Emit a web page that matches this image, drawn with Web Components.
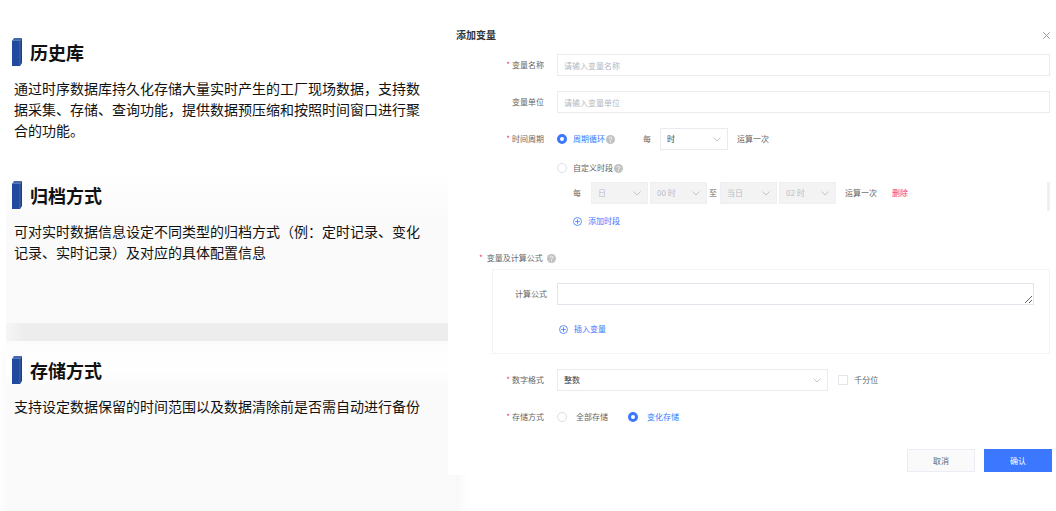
<!DOCTYPE html>
<html lang="zh-CN">
<head>
<meta charset="utf-8">
<title>添加变量</title>
<style>
    * { box-sizing: border-box; }
    body {
        margin: 0;
        background: #fff;
        color: #666;
        font: 8px/12px "Noto Sans CJK SC", "Liberation Sans", sans-serif;
    }
    main {
        display: flex;
        align-items: flex-start;
        min-height: 100vh;
    }
    .features {
        display: flex;
        flex: 0 0 456px;
        flex-direction: column;
        align-self: stretch;
    }
    .first { padding-top: 38px; min-height: 172px; }
    .second {
        padding-top: 9px;
        min-height: 151px;
        background: linear-gradient(#fff, #fafafa 46px);
    }
    .third {
        flex: 1;
        padding-top: 15px;
        background: linear-gradient(#fcfcfc, #fff 28px, #fafafa 46px);
        box-shadow: 2px 8px 13px #0000000d;
    }
    .divider {
        height: 18px;
        margin-left: 6px;
        background: linear-gradient(to right, #f6f6f6, #ededed 18px);
    }
    .line { display: flex; align-items: center; }
    .times { padding-left: 16px; }
    .space { width: 28px; }
    .pair { display: flex; gap: 2px; }
    .to { padding: 0 3px 0 2px; }
    .section { padding: 10px 0 5px 23px; display: flex; align-items: center; gap: 3px; }
    .section b { color: #f5356e; font-weight: normal; margin-right: 1px; }
    .panel {
        margin: -15px 0 0 36px;
        padding: 13px 15px 18px 0;
        border: 1px solid #f2f3f5;
    }
    .insert { padding: 18px 0 0 66px; }
    .period { width: 68px; }
    .slot { width: 57px; }
</style>
</head>
<body>
<main>
    <section class="features">
        <feature-block class="first">
            <span slot="title">历史库</span>
            通过时序数据库持久化存储大量实时产生的工厂现场数据，支持数据采集、存储、查询功能，提供数据预压缩和按照时间窗口进行聚合的功能。
        </feature-block>
        <feature-block class="second">
            <span slot="title">归档方式</span>
            可对实时数据信息设定不同类型的归档方式（例：定时记录、变化记录、实时记录）及对应的具体配置信息
        </feature-block>
        <div class="divider"></div>
        <feature-block class="third">
            <span slot="title">存储方式</span>
            支持设定数据保留的时间范围以及数据清除前是否需自动进行备份
        </feature-block>
    </section>

    <variable-dialog>
        <span slot="title">添加变量</span>

        <text-field label="变量名称" placeholder="请输入变量名称" required></text-field>
        <text-field label="变量单位" placeholder="请输入变量单位"></text-field>

        <form-row label="时间周期" required>
            <div class="line">
                <radio-item group="period" label="周期循环" checked></radio-item>
                <help-icon></help-icon>
                <span class="space"></span>
                <span>每</span>
                <select-box class="period" style="margin: 0 9px" label="周期单位" options="时,日,月"></select-box>
                <span>运算一次</span>
            </div>
            <div class="line" style="margin-top: 12px">
                <radio-item group="period" label="自定义时段"></radio-item>
                <help-icon></help-icon>
            </div>
            <div class="line times" style="margin-top: 8px">
                <span style="margin-right: 10px">每</span>
                <div class="pair">
                    <select-box class="slot" label="开始日" options="日" disabled></select-box>
                    <select-box class="slot" label="开始时间" options="00 时" disabled></select-box>
                </div>
                <span class="to">至</span>
                <div class="pair">
                    <select-box class="slot" label="结束日" options="当日" disabled></select-box>
                    <select-box class="slot" label="结束时间" options="02 时" disabled></select-box>
                </div>
                <span style="margin: 0 15px 0 9px">运算一次</span>
                <link-button danger>删除</link-button>
            </div>
            <div class="line times" style="margin-top: 11px">
                <link-button plus>添加时段</link-button>
            </div>
        </form-row>

        <div class="section"><b>*</b><span>变量及计算公式</span><help-icon></help-icon></div>
        <div class="panel">
            <text-field label="计算公式" multiline></text-field>
            <div class="insert"><link-button plus>插入变量</link-button></div>
        </div>

        <select-field label="数字格式" options="整数,小数" required>
            <check-item label="千分位"></check-item>
        </select-field>

        <form-row label="存储方式" required>
            <div class="line" style="gap: 20px">
                <radio-item group="store" label="全部存储" wide></radio-item>
                <radio-item group="store" label="变化存储" wide checked></radio-item>
            </div>
        </form-row>

        <action-button slot="footer">取消</action-button>
        <action-button slot="footer" primary>确认</action-button>
    </variable-dialog>
</main>

<script>
    const baseStyles = `
        * { box-sizing: border-box; }
        :host { display: block; }
        input, select, textarea, button { font: inherit; color: inherit; border-radius: 0; outline: none; }
    `;

    // label column + control column, shared by every kind of field
    const rowStyles = `
        .row { display: flex; gap: 13px; }
        .name {
            flex: 0 0 88px;
            line-height: 22px;
            text-align: right;
            white-space: nowrap;
        }
        .name i { color: #f5356e; font-style: normal; margin-right: 2px; }
        .control { flex: 1; min-width: 0; }
    `;

    const chevron = `
        <svg width="8" height="5" viewBox="0 0 8 5" fill="none" stroke="#c0c4cc">
            <path d="M.5 .5 4 4 7.5 .5"/>
        </svg>`;

    class BaseElement extends HTMLElement {
        constructor() {
            super();
            this.attachShadow({ mode: "open" });
        }
        attr(name) {
            return this.getAttribute(name) || "";
        }
        star() {
            return this.hasAttribute("required") ? "<i>*</i>" : "";
        }
        connectedCallback() {
            const template = document.createElement("template");
            template.innerHTML = `<style>${baseStyles}${this.getStyles()}</style>${this.getTemplate()}`;
            this.shadowRoot.replaceChildren(template.content.cloneNode(true));
            this.ready();
        }
        ready() {}
    }

    class FeatureBlock extends BaseElement {
        getStyles() {
            return `
            :host { margin-left: 6px; padding-left: 6px; }
            header { display: flex; align-items: center; gap: 8px; height: 28px; }
            h2 { margin: 0; font-size: 18px; line-height: 28px; color: #111; }
            p { margin: 12px 0 0 2px; max-width: 29em; font-size: 14px; line-height: 21px; color: #111; }
            svg { display: block; }
            `;
        }
        getTemplate() {
            return `
            <header>
                <svg width="10" height="28" viewBox="0 0 10 28">
                    <path d="M0 3 2 0H10L8 3Z" fill="#4468ac"/>
                    <path d="M8 3 10 0V25L8 28Z" fill="#1b3f86"/>
                    <path d="M0 3H8V28H0Z" fill="#1f4a9d"/>
                    <path d="M0 2.5H8V27" fill="none" stroke="#6f8cc4" stroke-width=".5"/>
                </svg>
                <h2><slot name="title"></slot></h2>
            </header>
            <p><slot></slot></p>`;
        }
    }

    class VariableDialog extends BaseElement {
        getStyles() {
            return `
            :host {
                position: relative;
                flex: 1;
                min-width: 0;
                margin-left: -8px;
                padding: 26px 6px 3px 8px;
                background: #fff;
            }
            header { display: flex; justify-content: space-between; align-items: center; margin-bottom: 10px; }
            h3 { margin: 0; font-size: 10px; line-height: 18px; color: #333; }
            .close { padding: 0; border: 0; background: none; display: flex; }
            .body { display: flex; flex-direction: column; gap: 15px; }
            footer { display: flex; justify-content: flex-end; gap: 9px; margin: 21px -2px 0 0; }
            /* scroll thumb lies over the form's right edge */
            .thumb { position: absolute; top: 182px; right: 6px; width: 3px; height: 29px; background: #f0f0f1; }
            `;
        }
        getTemplate() {
            return `
            <header>
                <h3><slot name="title"></slot></h3>
                <button class="close" aria-label="关闭">
                    <svg width="7" height="7" viewBox="0 0 7 7" stroke="#999da5"><path d="M.3 .3 6.7 6.7M6.7 .3 .3 6.7"/></svg>
                </button>
            </header>
            <div class="body"><slot></slot></div>
            <footer><slot name="footer"></slot></footer>
            <div class="thumb"></div>`;
        }
    }

    class FormRow extends BaseElement {
        getStyles() {
            return rowStyles + `
            ::slotted(.line:first-child) { min-height: 22px; }
            `;
        }
        getTemplate() {
            return `
            <div class="row" role="group" aria-labelledby="name">
                <span class="name" id="name">${this.star()}${this.attr("label")}</span>
                <div class="control"><slot></slot></div>
            </div>`;
        }
    }

    class TextField extends BaseElement {
        getStyles() {
            return rowStyles + `
            input, textarea {
                display: block;
                width: 100%;
                height: 22px;
                padding: 0 6px;
                border: 1px solid #e9ebef;
                background: #fff;
            }
            textarea { border-color: #e1e4ea; }
            :host([multiline]) .name { flex-basis: 54px; }
            :host([multiline]) .row { gap: 10px; }
            ::placeholder { color: #b4b8c2; opacity: 1; }
            `;
        }
        getTemplate() {
            const field = this.hasAttribute("multiline")
                ? `<textarea id="field"></textarea>`
                : `<input id="field" type="text" placeholder="${this.attr("placeholder")}">`;
            return `
            <div class="row">
                <label class="name" for="field">${this.star()}${this.attr("label")}</label>
                <div class="control">${field}</div>
            </div>`;
        }
    }

    const selectStyles = `
        .select { display: grid; align-items: center; }
        .select > * { grid-area: 1 / 1; }
        .select svg { justify-self: end; margin-right: 7px; pointer-events: none; }
        select {
            appearance: none;
            width: 100%;
            height: 22px;
            padding: 0 6px;
            border: 1px solid #e9ebef;
            background: #fff;
            color: #444;
        }
        select:disabled { background: #f3f3f4; border-color: #eeeff2; color: #b9bcc4; opacity: 1; }
    `;

    function renderSelect(element) {
        const options = element.attr("options").split(",").map(text => `<option>${text}</option>`).join("");
        const disabled = element.hasAttribute("disabled") ? "disabled" : "";
        return `
        <div class="select">
            <select id="field" aria-label="${element.attr("label")}" ${disabled}>${options}</select>
            ${chevron}
        </div>`;
    }

    class SelectBox extends BaseElement {
        getStyles() {
            return selectStyles;
        }
        getTemplate() {
            return renderSelect(this);
        }
    }

    class SelectField extends BaseElement {
        getStyles() {
            return rowStyles + selectStyles + `
            .control { display: flex; align-items: center; gap: 10px; }
            .select { flex: 0 0 55%; }
            `;
        }
        getTemplate() {
            return `
            <div class="row">
                <label class="name" for="field">${this.star()}${this.attr("label")}</label>
                <div class="control">${renderSelect(this)}<slot></slot></div>
            </div>`;
        }
    }

    class RadioItem extends BaseElement {
        getStyles() {
            return `
            label { display: flex; align-items: center; gap: 6px; }
            :host([wide]) label { gap: 9px; }
            input {
                appearance: none;
                width: 10px;
                height: 10px;
                margin: 0;
                border: 1px solid #dcdfe6;
                border-radius: 50%;
                background: #fff;
            }
            input:checked { border: 3px solid #3b78ff; }
            input:checked + span { color: #3b78ff; }
            `;
        }
        getTemplate() {
            const checked = this.hasAttribute("checked") ? "checked" : "";
            return `<label><input type="radio" ${checked}><span>${this.attr("label")}</span></label>`;
        }
        ready() {
            // names do not group across shadow roots
            this.input = this.shadowRoot.querySelector("input");
            this.input.addEventListener("change", () => {
                document.querySelectorAll(`radio-item[group="${this.attr("group")}"]`).forEach(item => {
                    if (item !== this) item.input.checked = false;
                });
            });
        }
    }

    class CheckItem extends BaseElement {
        getStyles() {
            return `
            label { display: flex; align-items: center; gap: 6px; }
            input {
                appearance: none;
                width: 10px;
                height: 10px;
                margin: 0;
                border: 1px solid #e1e4ea;
                border-radius: 1px;
            }
            input:checked { background: #3b78ff; }
            `;
        }
        getTemplate() {
            return `<label><input type="checkbox"><span>${this.attr("label")}</span></label>`;
        }
    }

    class HelpIcon extends BaseElement {
        getStyles() {
            return `
            :host { margin-left: 1px; }
            svg { display: block; }
            `;
        }
        getTemplate() {
            return `
            <svg width="9" height="9" viewBox="0 0 18 18" fill="none">
                <circle cx="9" cy="9" r="9" fill="#c2c2c2"/>
                <path d="M6.3 7.2C6.3 3.4 11.8 3.6 11.8 7 11.8 9 9 9 9 11.2" stroke="#fff" stroke-width="1.8"/>
                <circle cx="9" cy="13.7" r="1.2" fill="#fff"/>
            </svg>`;
        }
    }

    class LinkButton extends BaseElement {
        getStyles() {
            return `
            button { display: flex; align-items: center; gap: 6px; padding: 0; border: 0; background: none; color: #3b78ff; }
            :host([danger]) button { color: #f5356e; }
            `;
        }
        getTemplate() {
            const plus = `
            <svg width="9" height="9" viewBox="0 0 9 9" fill="none" stroke="#3b78ff" stroke-width=".8">
                <circle cx="4.5" cy="4.5" r="4"/>
                <path d="M2.2 4.5H6.8M4.5 2.2V6.8"/>
            </svg>`;
            return `<button>${this.hasAttribute("plus") ? plus : ""}<slot></slot></button>`;
        }
    }

    class ActionButton extends BaseElement {
        getStyles() {
            return `
            button { display: block; width: 68px; height: 23px; padding: 0; border: 1px solid #ebedf4; background: #fafafa; }
            :host([primary]) button { border-color: #3b78ff; background: #3b78ff; color: #fff; }
            `;
        }
        getTemplate() {
            return `<button><slot></slot></button>`;
        }
    }

    customElements.define("feature-block", FeatureBlock);
    customElements.define("variable-dialog", VariableDialog);
    customElements.define("form-row", FormRow);
    customElements.define("text-field", TextField);
    customElements.define("select-box", SelectBox);
    customElements.define("select-field", SelectField);
    customElements.define("radio-item", RadioItem);
    customElements.define("check-item", CheckItem);
    customElements.define("help-icon", HelpIcon);
    customElements.define("link-button", LinkButton);
    customElements.define("action-button", ActionButton);
</script>
</body>
</html>
